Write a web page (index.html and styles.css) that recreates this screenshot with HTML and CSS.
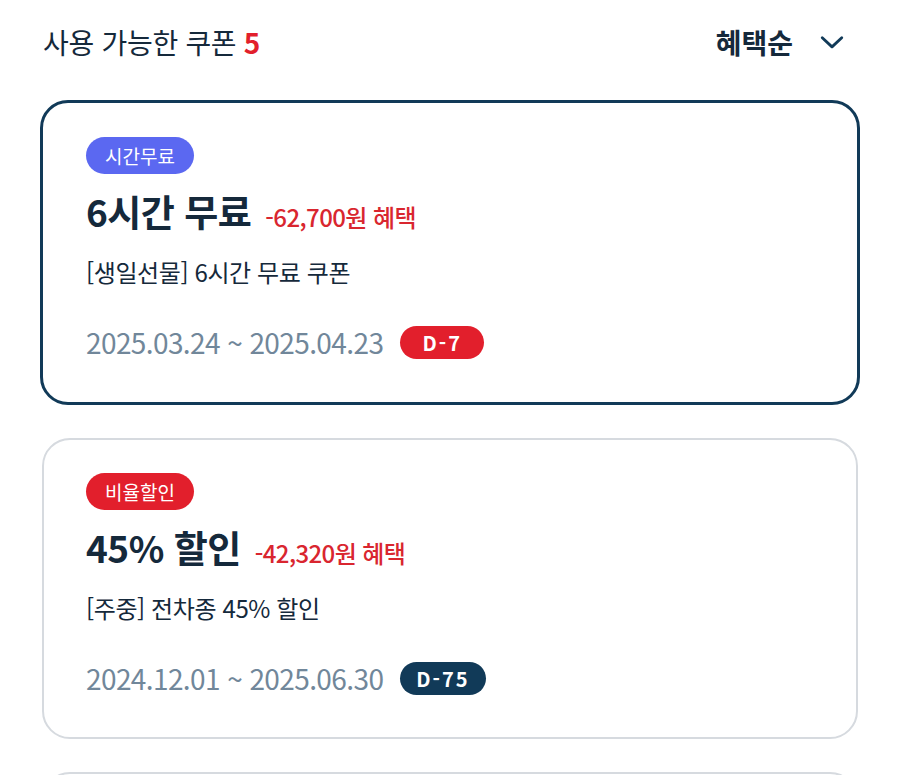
FILE: index.html
```html
<!DOCTYPE html>
<html lang="ko">
<head>
  <meta charset="UTF-8" />
  <title>쿠폰함</title>
  <link rel="stylesheet" href="styles.css">
</head>
<body>
  <div class="coupon-header">
    <h1 class="coupon-count">사용 가능한 쿠폰 <span class="count-num">5</span></h1>
    <button class="sort-select">
      혜택순
      <svg class="chevron" viewBox="0 0 24 24">
        <path d="M3 8l9 8.5L21 8" />
      </svg>
    </button>
  </div>

  <main class="coupon-list">
    <div class="coupon-card selected">
      <span class="type-badge time">시간무료</span>
      <div class="coupon-title">
        <strong>6시간 무료</strong>
        <span class="benefit">-62,700원 혜택</span>
      </div>
      <p class="coupon-desc">[생일선물] 6시간 무료 쿠폰</p>
      <div class="coupon-period">
        <span class="dates">2025.03.24 ~ 2025.04.23</span>
        <span class="dday urgent">D-7</span>
      </div>
    </div>

    <div class="coupon-card">
      <span class="type-badge rate">비율할인</span>
      <div class="coupon-title">
        <strong>45% 할인</strong>
        <span class="benefit">-42,320원 혜택</span>
      </div>
      <p class="coupon-desc">[주중] 전차종 45% 할인</p>
      <div class="coupon-period">
        <span class="dates">2024.12.01 ~ 2025.06.30</span>
        <span class="dday">D-75</span>
      </div>
    </div>

    <div class="coupon-card">
      <span class="type-badge rate">금액할인</span>
      <div class="coupon-title">
        <strong>10,000원 할인</strong>
        <span class="benefit">-10,000원 혜택</span>
      </div>
      <p class="coupon-desc">[신규가입] 첫 이용 할인 쿠폰</p>
      <div class="coupon-period">
        <span class="dates">2025.01.01 ~ 2025.12.31</span>
        <span class="dday">D-259</span>
      </div>
    </div>
  </main>
</body>
</html>
```

FILE: styles.css
```css
:root {
  --navy: #113a58;
  --text: #15293b;
  --red: #e21f2c;
  --red-text: #d9262f;
  --gray: #71879a;
  --border: #d6dadf;
  --blue: #5b68f1;
  --radius: 28px;
}

* {
  margin: 0;
  padding: 0;
  box-sizing: border-box;
}

html, body {
  width: 900px;
  background: #ffffff;
  color: var(--text);
  font-family: "Noto Sans CJK KR", "Noto Sans", sans-serif;
}

.coupon-header {
  height: 84px;
  padding: 0 55px 0 43px;
  display: flex;
  align-items: center;
  justify-content: space-between;
}

.coupon-count {
  font-size: 28px;
  font-weight: 400;
  letter-spacing: -0.3px;
}

.count-num {
  color: var(--red);
  font-weight: 700;
}

.sort-select {
  display: flex;
  align-items: center;
  gap: 26px;
  border: none;
  background: none;
  font-family: inherit;
  font-size: 28px;
  font-weight: 700;
  color: var(--text);
  cursor: pointer;
}

.chevron {
  width: 26px;
  height: 26px;
  fill: none;
  stroke: var(--navy);
  stroke-width: 2.6;
  stroke-linecap: round;
  stroke-linejoin: round;
}

.coupon-list {
  padding: 16px 40px 0;
  display: flex;
  flex-direction: column;
  gap: 33px;
}

.coupon-card {
  margin: 0 2px;
  padding: 33px 42px 42px;
  border: 2px solid var(--border);
  border-radius: var(--radius);
  display: flex;
  flex-direction: column;
  align-items: flex-start;
}

.coupon-card.selected {
  margin: 0;
  padding: 34px 43px 43px;
  border: 3px solid var(--navy);
}

.type-badge {
  height: 37px;
  padding: 0 19px;
  border-radius: 19px;
  display: inline-flex;
  align-items: center;
  color: #ffffff;
  font-size: 19px;
}

.type-badge.time {
  background: var(--blue);
}

.type-badge.rate {
  background: var(--red);
}

.coupon-title {
  margin-top: 14px;
  display: flex;
  align-items: baseline;
  gap: 14px;
  line-height: 47px;
}

.coupon-title strong {
  font-size: 37px;
  font-weight: 700;
  letter-spacing: -0.5px;
}

.benefit {
  color: var(--red-text);
  font-size: 24px;
  font-weight: 500;
  letter-spacing: -0.6px;
}

.coupon-desc {
  margin-top: 15px;
  font-size: 24px;
  line-height: 34px;
  letter-spacing: -0.4px;
}

.coupon-period {
  margin-top: 37px;
  display: flex;
  align-items: center;
  gap: 17px;
}

.dates {
  color: var(--gray);
  font-size: 28px;
  line-height: 33px;
  letter-spacing: -0.6px;
}

.dday {
  height: 33px;
  min-width: 84px;
  padding: 0 16px;
  border-radius: 17px;
  display: inline-flex;
  align-items: center;
  justify-content: center;
  background: var(--navy);
  color: #ffffff;
  font-size: 20px;
  font-weight: 700;
  letter-spacing: 2px;
}

.dday.urgent {
  background: var(--red);
}
```
